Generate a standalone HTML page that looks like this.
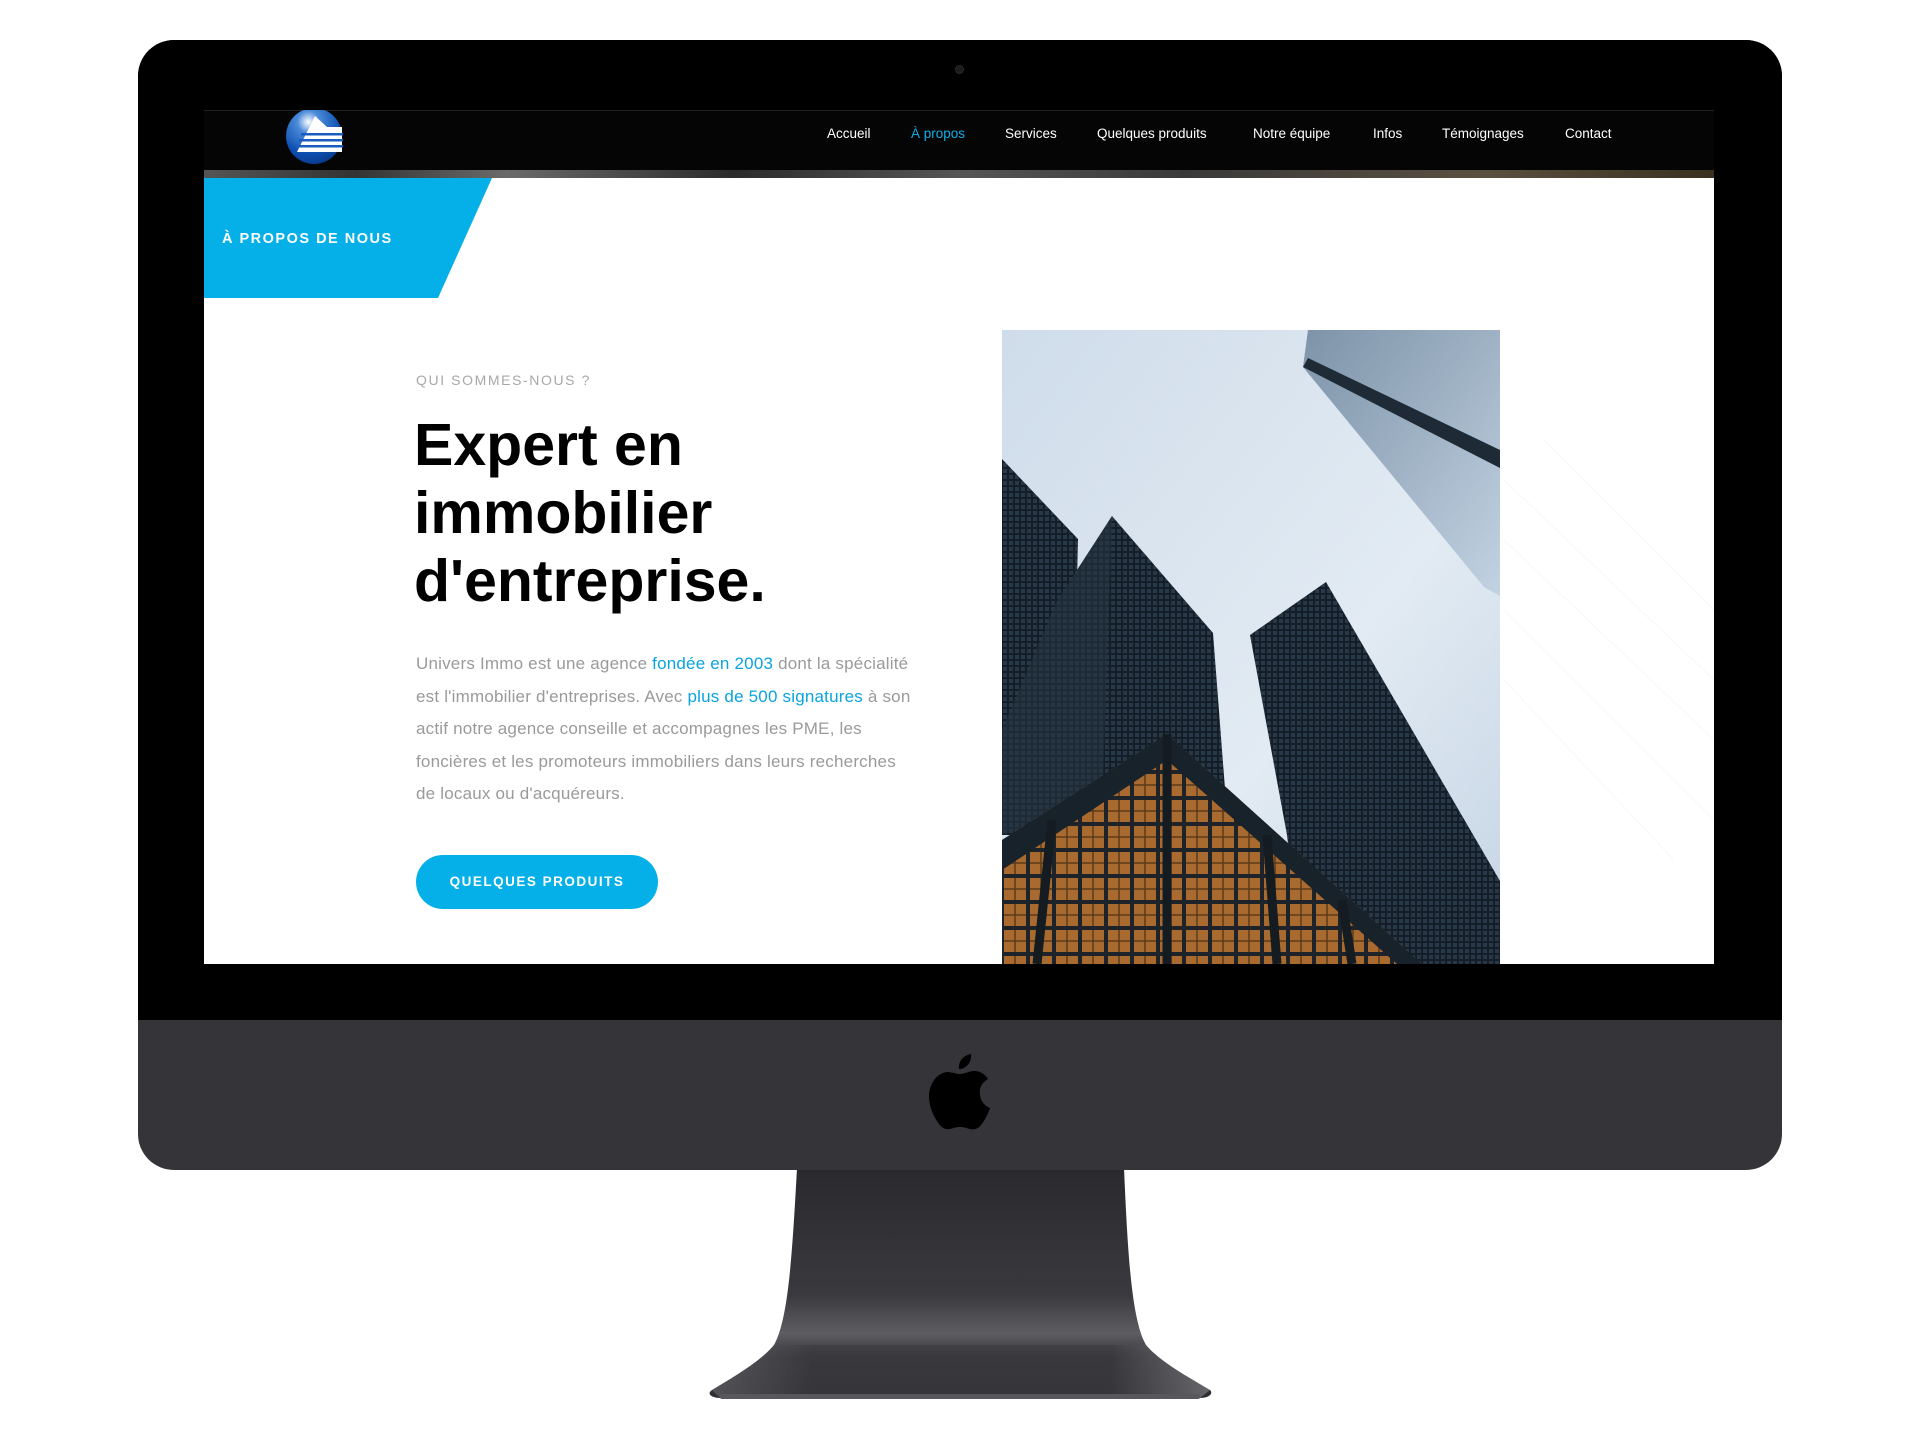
<!DOCTYPE html>
<html><head><meta charset="utf-8">
<style>
*{margin:0;padding:0;box-sizing:border-box}
html,body{width:1920px;height:1440px;background:#fff;overflow:hidden;font-family:"Liberation Sans",sans-serif}
.abs{position:absolute}
.nav a{position:absolute;top:16px;color:#fff;font-size:13.5px;text-decoration:none;white-space:nowrap}
</style></head><body>
<svg class="abs" style="left:0;top:0" width="1920" height="1440">
<defs>
<linearGradient id="st" x1="0" y1="0" x2="0" y2="1">
<stop offset="0" stop-color="#2a2a2e"/><stop offset="0.55" stop-color="#3a3a3e"/><stop offset="0.72" stop-color="#5e5d62"/><stop offset="0.82" stop-color="#38383c"/><stop offset="1" stop-color="#2e2e32"/>
</linearGradient>
<linearGradient id="base" x1="0" y1="0" x2="1" y2="0">
<stop offset="0" stop-color="#6a6a6e"/><stop offset="0.2" stop-color="#3a3a3e"/><stop offset="0.8" stop-color="#3a3a3e"/><stop offset="1" stop-color="#8a8a8e"/>
</linearGradient>
</defs>
<path d="M797 1168 L1124 1168 C1128 1260 1132 1320 1146 1345 C1160 1362 1190 1378 1210 1390 C1214 1394 1208 1398 1200 1398 L720 1398 C712 1398 706 1394 712 1390 C732 1378 760 1362 774 1345 C788 1320 792 1260 797 1168 Z" fill="url(#st)"/>
<path d="M712 1390 C732 1378 760 1362 774 1345 L1146 1345 C1160 1362 1190 1378 1210 1390 L1200 1398 L720 1398 Z" fill="url(#base)" opacity="0.6"/>
<rect x="720" y="1394" width="480" height="5" rx="2" fill="#58585c"/>
</svg>
<div class="abs" style="left:138px;top:40px;width:1644px;height:1130px;border-radius:36px;background:#353539;overflow:hidden">
  <div class="abs" style="left:0;top:0;width:1644px;height:980px;background:#000"></div>
</div>
<div class="abs" style="left:955px;top:65px;width:9px;height:9px;border-radius:50%;background:#1c1c1e;border:1px solid #2a2a2c"></div>
<svg class="abs" style="left:929px;top:1052px" width="62" height="78" viewBox="0 0 62 78">
<path d="M42 2 C43 9 38 17 30 17 C29 9 35 3 42 2 Z" fill="#000"/>
<path d="M31 22 C36 22 40 19 45 19 C51 19 56 22 59 27 C52 31 50 37 51 43 C52 50 56 54 61 56 C59 62 56 68 52 73 C49 77 45 78 41 77 C37 76 35 75 31 75 C27 75 25 76 21 77 C17 78 13 76 10 72 C4 64 0 54 0 44 C0 32 8 21 18 20 C23 20 27 22 31 22 Z" fill="#000"/>
</svg>
<div class="abs" style="left:204px;top:110px;width:1510px;height:854px;background:#fff;overflow:hidden">
  <div class="abs" style="left:0;top:0;width:1510px;height:60px;background:#050505;border-top:1px solid #222"></div>
  <div class="abs" style="left:0;top:60px;width:1510px;height:8px;background:linear-gradient(90deg,#555 0,#333 10%,#6a6a6a 20%,#2c2c2c 35%,#555 50%,#3a3a3a 65%,#5a5040 85%,#3a3020 100%)"></div>
  <svg class="abs" style="left:81px;top:-3px" width="58" height="58" viewBox="0 0 58 58">
    <defs><radialGradient id="lg" cx="0.4" cy="0.25" r="0.8"><stop offset="0" stop-color="#fff"/><stop offset="0.25" stop-color="#4a8ad8"/><stop offset="0.7" stop-color="#0d4fb0"/><stop offset="1" stop-color="#083a8a"/></radialGradient></defs>
    <circle cx="29" cy="29" r="28" fill="url(#lg)"/>
    <path d="M30 9 L12 45 L57 45 L57 20 L42 20 Z" fill="#fff"/>
    <rect x="16" y="26" width="42" height="2.5" fill="#1a5bbf"/>
    <rect x="14" y="32" width="44" height="2.5" fill="#1a5bbf"/>
    <rect x="12" y="38" width="46" height="2.5" fill="#1a5bbf"/>
  </svg>
  <div class="nav">
    <a style="left:623px">Accueil</a>
    <a style="left:707px;color:#12aee8">À propos</a>
    <a style="left:801px">Services</a>
    <a style="left:893px">Quelques produits</a>
    <a style="left:1049px">Notre équipe</a>
    <a style="left:1169px">Infos</a>
    <a style="left:1238px">Témoignages</a>
    <a style="left:1361px">Contact</a>
  </div>
  <svg class="abs" style="left:0;top:68px" width="300" height="120"><polygon points="0,0 288,0 234,120 0,120" fill="#05b0e8"/></svg>
  <div class="abs" style="left:18px;top:121px;color:#fff;font-size:14.5px;font-weight:bold;letter-spacing:1.5px">À PROPOS DE NOUS</div>
  <svg class="abs" style="left:1300px;top:330px" width="210" height="420" opacity="0.5">
    <g stroke="#eef1f4" stroke-width="1">
      <line x1="0" y1="100" x2="210" y2="300"/><line x1="0" y1="40" x2="210" y2="240"/><line x1="40" y1="0" x2="210" y2="170"/><line x1="0" y1="170" x2="210" y2="380"/><line x1="0" y1="240" x2="170" y2="420"/>
    </g>
  </svg>
  <div class="abs" style="left:212px;top:262px;color:#a8a8a8;font-size:14px;letter-spacing:1.6px">QUI SOMMES-NOUS ?</div>
  <div class="abs" style="left:210px;top:301px;color:#000;font-size:59px;font-weight:bold;line-height:68px;letter-spacing:0">Expert en<br>immobilier<br>d'entreprise.</div>
  <div class="abs" style="left:212px;top:538px;color:#9a9a9a;font-size:17px;line-height:32.5px;white-space:nowrap;letter-spacing:0.2px">Univers Immo est une agence <span style="color:#0aa3de">fondée en 2003</span> dont la spécialité<br>est l'immobilier d'entreprises. Avec <span style="color:#0aa3de">plus de 500 signatures</span> à son<br>actif notre agence conseille et accompagnes les PME, les<br>foncières et les promoteurs immobiliers dans leurs recherches<br>de locaux ou d'acquéreurs.</div>
  <div class="abs" style="left:212px;top:745px;width:242px;height:54px;border-radius:27px;background:#05b0e8;color:#fff;font-size:13.5px;font-weight:bold;letter-spacing:1.5px;text-align:center;line-height:54px">QUELQUES PRODUITS</div>
  <svg class="abs" style="left:798px;top:220px" width="498" height="634" viewBox="0 0 498 634">
    <defs>
      <linearGradient id="sky" x1="0" y1="0" x2="1" y2="1"><stop offset="0" stop-color="#cfdcea"/><stop offset="0.6" stop-color="#e2ebf3"/><stop offset="1" stop-color="#c5d4e4"/></linearGradient>
      <linearGradient id="gl" x1="0" y1="0" x2="1" y2="1"><stop offset="0" stop-color="#7d93a8"/><stop offset="1" stop-color="#c2d2e2"/></linearGradient>
      <pattern id="win" width="6" height="6" patternUnits="userSpaceOnUse"><rect width="6" height="6" fill="#141e28"/><rect x="1" y="1" width="4" height="4" fill="#283846"/></pattern>
      <pattern id="org" width="26" height="26" patternUnits="userSpaceOnUse"><rect width="26" height="26" fill="#1d2328"/><rect x="2" y="2" width="22" height="22" fill="#a86a2e"/><path d="M2 13 H24 M13 2 V24" stroke="#5a3a1a" stroke-width="1.5"/></pattern>
    </defs>
    <rect width="498" height="634" fill="url(#sky)"/>
    <polygon points="301,37 306,0 498,0 498,266 482,257" fill="url(#gl)"/>
    <polygon points="301,37 306,28 498,120 498,138" fill="#1e2a36"/>
    <polygon points="0,129 76,209 69,505 0,505" fill="url(#win)"/>
    <polygon points="110,186 211,303 223,459 0,505 0,400 55,271" fill="url(#win)"/>
    <polygon points="110,186 55,271 0,400 0,505 100,480" fill="#25333f" opacity="0.6"/>
    <polygon points="248,305 324,252 498,551 498,634 300,634 285,505" fill="url(#win)"/>
    <polygon points="0,510 165,404 420,634 0,634" fill="url(#org)"/>
    <polygon points="0,510 165,404 420,634 395,634 165,430 0,540" fill="#18222a"/>
    <g stroke="#141c22" stroke-width="9"><line x1="165" y1="404" x2="165" y2="634"/><line x1="50" y1="490" x2="35" y2="634"/><line x1="265" y1="505" x2="275" y2="634"/><line x1="340" y1="570" x2="350" y2="634"/></g>
  </svg>
</div>
</body></html>
